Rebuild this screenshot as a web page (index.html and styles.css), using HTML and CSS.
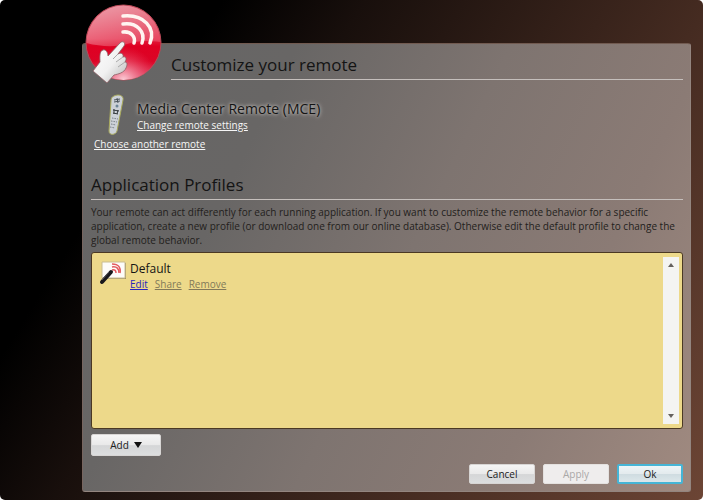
FILE: index.html
```html
<!DOCTYPE html>
<html lang="en">
<head>
<meta charset="utf-8">
<title>Customize your remote</title>
<link rel="stylesheet" href="styles.css">
</head>
<body>
<main class="panel">
  <header class="header">
    <svg class="logo" viewBox="0 0 80 84" aria-hidden="true">
      <defs>
        <linearGradient id="ball" x1="0" y1="0" x2="0" y2="1">
          <stop offset="0" stop-color="#dc4058"/><stop offset=".45" stop-color="#e3203f"/><stop offset=".55" stop-color="#df0022"/><stop offset=".75" stop-color="#dc0426"/><stop offset="1" stop-color="#e0486a"/>
        </linearGradient>
        <radialGradient id="glow" cx=".5" cy="1" r=".45">
          <stop offset="0" stop-color="#ffdde4" stop-opacity=".9"/><stop offset="1" stop-color="#f05070" stop-opacity="0"/>
        </radialGradient>
        <linearGradient id="gloss" x1="0" y1="0" x2=".6" y2="1">
          <stop offset="0" stop-color="#fff" stop-opacity=".5"/><stop offset="1" stop-color="#fff" stop-opacity=".18"/>
        </linearGradient>
        <linearGradient id="hand" x1="0" y1="0" x2="1" y2="1">
          <stop offset="0" stop-color="#fff"/><stop offset=".55" stop-color="#f1f1f1"/><stop offset="1" stop-color="#b5b5b5"/>
        </linearGradient>
      </defs>
      <circle cx="40.500" cy="40.500" r="37.500" fill="url(#ball)" stroke="#b84a58"/>
      <circle cx="40.500" cy="40.500" r="37.500" fill="url(#glow)"/>
      <path d="M3.500 41a37 37 0 0 1 74-1C62 38 54 39 44 42S18 45 3.500 41z" fill="url(#gloss)"/>
      <g fill="none" stroke="#fff5f1" stroke-width="3.500" stroke-linecap="round">
        <path d="M40 30c8-1 13 5 11 11"/><path d="M40 22c14-2 23 8 19 19"/><path d="M40 14c21-2 33 12 27 27"/>
      </g>
      <path d="M10 69L17 60C17 56 16 49 20 48C23 47 25 51 25 54L37 41C40 38 43 41 41 44L35 52C38 50 41 52 40 55C43 54 44 57 42 60C45 60 44 64 43 66C41 71 35 72 31 73L24 81z" fill="url(#hand)" stroke="#8b6064" stroke-width=".8" stroke-linejoin="round"/>
      <path d="M35 52l-5 5M40 55l-7 5M42 60l-7 5" stroke="#aaa" fill="none"/>
    </svg>
    <h1 class="title">Customize your remote</h1>
  </header>

  <section class="device">
    <svg class="remote" viewBox="0 0 24 42" aria-hidden="true">
      <path d="M9 2c4-2 10-1 9 4L12 37c-1 4-8 5-8 0L6 7c0-3 1-4 3-5z" fill="#ccd1d8" stroke="#a9aa5c"/>
      <path d="M9 6l6-1M9 8l6-1M12 4l1 5" stroke="#4a535c"/>
      <circle cx="12" cy="12" r="1.500" fill="#6d8597"/>
      <path d="M8 16l6 1M8 19l5 1M9 15v5M13 16l-1 4" stroke="#353a3e"/>
      <path d="M7 24l6 1M6 27l6 1M6 30l5 1M5 33l5 1" stroke="#7c838a" stroke-dasharray="1.500 1"/>
    </svg>
    <div>
      <h2 class="device-name">Media Center Remote (MCE)</h2>
      <a class="link" href="#settings">Change remote settings</a>
    </div>
  </section>
  <a class="link choose" href="#choose">Choose another remote</a>

  <section class="profiles">
    <h2 class="title">Application Profiles</h2>
    <p class="intro">Your remote can act differently for each running application. If you want to customize the remote behavior for a specific application, create a new profile (or download one from our online database). Otherwise edit the default profile to change the global remote behavior.</p>
    <div class="list">
      <div class="profile">
        <svg class="profile-icon" viewBox="0 0 28 26" aria-hidden="true">
          <path d="M4 2h23v16H4z" fill="#a39562"/>
          <path d="M3 1h23v16H3z" fill="#fdfcf9" stroke="#cabd91"/>
          <g fill="none" stroke="#e35b60" stroke-width="1.500"><path d="M13 9c3-1 4 1 4 3"/><path d="M13 6c5-1 7 2 7 6"/><path d="M13 3c7 0 9 4 8 9"/></g>
          <path d="M3 21l9-10" stroke="#18181c" stroke-width="4" stroke-linecap="round"/>
          <path d="M3 19l7-8" stroke="#55555c"/>
        </svg>
        <div>
          <h3 class="profile-name">Default</h3>
          <nav class="actions"><a class="edit" href="#edit">Edit</a><a aria-disabled="true" href="#share">Share</a><a aria-disabled="true" href="#remove">Remove</a></nav>
        </div>
      </div>
      <div class="scroll">
        <button class="arrow" type="button" aria-label="Scroll up"><svg viewBox="0 0 6 4"><path d="M0 4l3-4 3 4z"/></svg></button>
        <button class="arrow" type="button" aria-label="Scroll down"><svg viewBox="0 0 6 4"><path d="M0 0h6L3 4z"/></svg></button>
      </div>
    </div>
  </section>
  <button class="button add" type="button">Add <svg viewBox="0 0 8 6" aria-hidden="true"><path d="M0 0h8L4 6z"/></svg></button>
  <footer class="footer">
    <button class="button" type="button">Cancel</button>
    <button class="button" type="button" disabled>Apply</button>
    <button class="button primary" type="button">Ok</button>
  </footer>
</main>
</body>
</html>
```
FILE: styles.css
```css
* { box-sizing: border-box; }
html { background: #fff; }
body {
  display: flex;
  min-height: 100vh;
  margin: 0;
  padding: 43px 12px 8px 82px;
  border-radius: 5px;
  background: linear-gradient(122deg, #000 0%, #000 22%, #180f0c 36%, #452b21 70%, #6c4535 100%);
  color: #141414;
  font-family: "Open Sans", "Noto Sans", sans-serif;
  font-size: 10px;
  line-height: 14px;
}
h1, h2, h3, p { margin: 0; font-weight: 400; }
.panel {
  display: flex;
  flex: 1;
  flex-direction: column;
  min-width: 0;
  padding: 0 7px 7px 8px;
  border: 1px solid #93857f;
  border-left-color: #77655f;
  border-top-color: #715a50;
  border-radius: 3px;
  background: linear-gradient(116deg, #656565 0%, #686665 26%, #7e7470 52%, #8b7b75 76%, #a08a80 100%);
}
.header { position: relative; padding-left: 80px; }
.logo {
  position: absolute;
  left: -8px;
  top: -42px;
  width: 80px;
  height: 84px;
}
.title {
  border-bottom: 1px solid #c5bfbc;
  font-size: 17px;
  line-height: 28px;
}
.header .title { padding-top: 7px; }
.device {
  display: flex;
  gap: 8px;
  margin: 14px 0 0 14px;
}
.remote { width: 24px; height: 42px; }
.device-name {
  padding-top: 6px;
  font-size: 14px;
  line-height: 18px;
  text-shadow: 0 0 4px #d0cbc8, 0 0 3px #aaa5a2;
}
.link { color: #f6f6f6; }
.choose { align-self: flex-start; margin: 1px 0 0 3px; }
.profiles {
  display: flex;
  flex: 1;
  flex-direction: column;
  margin-top: 20px;
}
.intro { padding: 5px 0 5px; color: #231e1c; }
.list {
  display: flex;
  flex: 1;
  justify-content: space-between;
  padding: 4px 3px 4px 7px;
  border: 1px solid #4b3923;
  border-radius: 3px;
  background: #edd98a;
}
.profile { display: flex; gap: 3px; padding-top: 4px; }
.profile-icon { width: 28px; height: 26px; }
.profile-name { font-size: 12px; line-height: 16px; }
.actions { display: flex; gap: 7px; }
.actions a { color: #827959; }
.actions .edit { color: #2923bd; }
.scroll {
  display: flex;
  flex-direction: column;
  justify-content: space-between;
  width: 16px;
  background: #f4f4f2;
}
.arrow {
  display: grid;
  place-items: center;
  height: 16px;
  padding: 0;
  border: 0;
  background: transparent;
}
.arrow svg { width: 6px; height: 4px; fill: #65615d; }
.button {
  display: flex;
  align-items: center;
  justify-content: center;
  gap: 5px;
  width: 66px;
  height: 20px;
  padding: 0;
  border: 1px solid #d7d5d4;
  border-radius: 2px;
  background: linear-gradient(#f5f5f5, #e9e9e9 50%, #d5d6d7 53%, #dcdedf);
  color: #202020;
  font: inherit;
}
.button:disabled { border-color: #e4e1df; background: #efeded; color: #aaa8a7; }
.primary {
  border: 2px solid #45b5d6;
  background: linear-gradient(#edf5f7, #e3eaed 50%, #cfdce1 53%, #dce7ea);
}
.add { width: 70px; height: 22px; margin-top: 5px; }
.add svg { width: 8px; height: 6px; fill: #111; }
.footer { display: flex; justify-content: flex-end; gap: 8px; margin-top: 8px; }
```
